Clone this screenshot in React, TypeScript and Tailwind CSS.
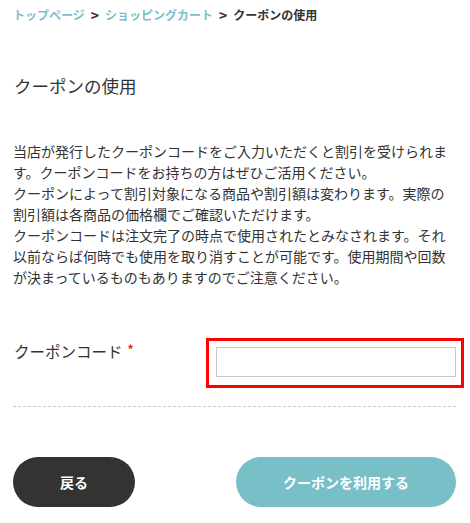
const font = { fontFamily: '"Noto Sans CJK JP", "Noto Sans", sans-serif' };

export default function App() {
  return (
    <div className="w-[470px] min-h-[523px] bg-white text-[#333] pl-[13px] pr-[14px]" style={font}>
      {/* breadcrumb */}
      <nav className="pt-[5px] flex items-center text-[12px] leading-[20px] font-bold">
        <a className="text-[#7cc0ca]">トップページ</a>
        <span className="mx-[6px] text-[#333] text-[14px]">&gt;</span>
        <a className="text-[#7cc0ca]">ショッピングカート</a>
        <span className="mx-[6px] text-[#333] text-[14px]">&gt;</span>
        <span>クーポンの使用</span>
      </nav>

      <h1 className="mt-[48px] text-[17.5px] leading-[26px] font-normal pl-px">クーポンの使用</h1>

      <p className="mt-[42px] text-[14px] leading-[21px]">
        当店が発行したクーポンコードをご入力いただくと割引を受けられます。クーポンコードをお持ちの方はぜひご活用ください。
        <br />
        クーポンによって割引対象になる商品や割引額は変わります。実際の割引額は各商品の価格欄でご確認いただけます。
        <br />
        クーポンコードは注文完了の時点で使用されたとみなされます。それ以前ならば何時でも使用を取り消すことが可能です。使用期間や回数が決まっているものもありますのでご注意ください。
      </p>

      {/* form row */}
      <div className="mt-[50px] flex items-start justify-between pb-[18px] border-b border-dashed border-[#ccc]">
        <label className="mt-[1px] pl-px text-[15.5px] leading-[24px] flex items-start">
          クーポンコード
          <span className="ml-[5px] mt-[2px] text-[#e0262b] text-[12px] leading-[16px] font-bold">*</span>
        </label>
        <div className="relative mt-[9px] mb-[11px]">
          <input type="text" className="block w-[240px] h-[30px] border border-[#c8c8c8] bg-white outline-none px-2 text-[14px]" />
          <div className="pointer-events-none absolute -left-[10px] -top-[9px] -right-[8px] -bottom-[11px] border-[3px] border-[#f00]" />
        </div>
      </div>

      {/* buttons */}
      <div className="mt-[50px] flex justify-between">
        <button className="w-[122px] h-[50px] rounded-full bg-[#333] text-white text-[14px] font-bold">戻る</button>
        <button className="w-[220px] h-[50px] rounded-full bg-[#78bfc8] text-white text-[14px] font-bold">クーポンを利用する</button>
      </div>
    </div>
  );
}
